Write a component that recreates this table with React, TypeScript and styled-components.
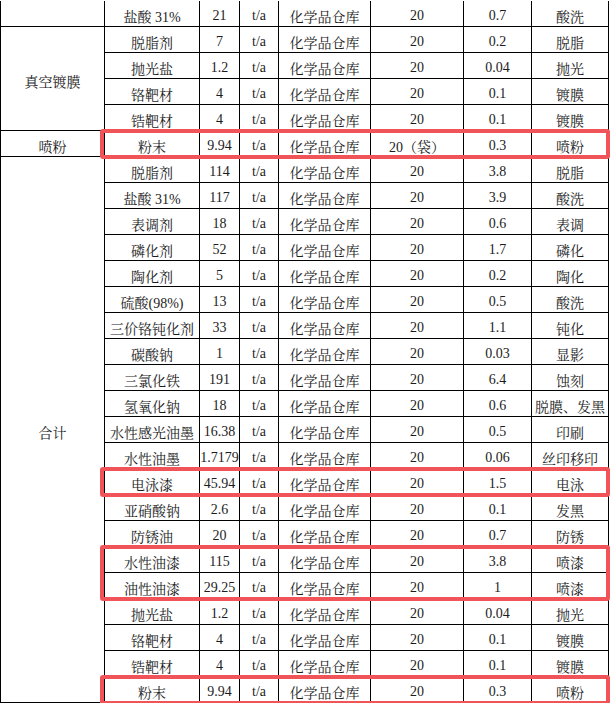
import React from 'react';
import styled, { createGlobalStyle } from 'styled-components';

const GlobalStyle = createGlobalStyle`
  html, body {
    margin: 0;
    padding: 0;
    background: #fff;
  }
  #root {
    padding-top: 1px;
  }
`;

const ROW_H = 26;

const Table = styled.div`
  display: flex;
  width: 609px;
  border-left: 1px solid #000;
  box-sizing: border-box;
  font-family: "Liberation Serif", "Noto Serif CJK SC", "Noto Sans CJK SC", serif;
  font-size: 14px;
  color: #1c1c1c;
`;

const GroupCol = styled.div`
  display: flex;
  flex-direction: column;
  width: 104px;
  flex: none;
`;

const GroupCell = styled.div<{ $span: number }>`
  box-sizing: border-box;
  height: ${p => p.$span * ROW_H}px;
  border-right: 1px solid #000;
  border-bottom: 1px solid #000;
  display: flex;
  align-items: center;
  justify-content: center;
  padding-top: 4px;
`;

const Body = styled.div`
  display: flex;
  flex-direction: column;
  width: 504px;
  flex: none;
`;

const Mark = styled.div`
  position: relative;

  &::after {
    content: '';
    position: absolute;
    top: -2px;
    bottom: -2px;
    left: -5px;
    right: -1px;
    border: 4px solid #f15458;
    border-radius: 3px;
    pointer-events: none;
  }
`;

const Row = styled.div`
  display: grid;
  grid-template-columns: 95px 40px 39px 92px 93px 68px 77px;
  height: ${ROW_H}px;
`;

const Cell = styled.div`
  box-sizing: border-box;
  border-right: 1px solid #000;
  border-bottom: 1px solid #000;
  display: flex;
  align-items: center;
  justify-content: center;
  padding-top: 4px;
  white-space: nowrap;
  overflow: visible;
`;

type Item = [string, string, string, string];

const groups: { name: string; items: Item[]; marks?: number[][] }[] = [
  { name: '', items: [['盐酸 31%', '21', '20', '0.7|酸洗']] },
  {
    name: '真空镀膜',
    items: [
      ['脱脂剂', '7', '20', '0.2|脱脂'],
      ['抛光盐', '1.2', '20', '0.04|抛光'],
      ['铬靶材', '4', '20', '0.1|镀膜'],
      ['锆靶材', '4', '20', '0.1|镀膜'],
    ],
  },
  { name: '喷粉', items: [['粉末', '9.94', '20（袋）', '0.3|喷粉']], marks: [[0, 1]] },
  {
    name: '合计',
    items: [
      ['脱脂剂', '114', '20', '3.8|脱脂'],
      ['盐酸 31%', '117', '20', '3.9|酸洗'],
      ['表调剂', '18', '20', '0.6|表调'],
      ['磷化剂', '52', '20', '1.7|磷化'],
      ['陶化剂', '5', '20', '0.2|陶化'],
      ['硫酸(98%)', '13', '20', '0.5|酸洗'],
      ['三价铬钝化剂', '33', '20', '1.1|钝化'],
      ['碳酸钠', '1', '20', '0.03|显影'],
      ['三氯化铁', '191', '20', '6.4|蚀刻'],
      ['氢氧化钠', '18', '20', '0.6|脱膜、发黑'],
      ['水性感光油墨', '16.38', '20', '0.5|印刷'],
      ['水性油墨', '1.7179', '20', '0.06|丝印移印'],
      ['电泳漆', '45.94', '20', '1.5|电泳'],
      ['亚硝酸钠', '2.6', '20', '0.1|发黑'],
      ['防锈油', '20', '20', '0.7|防锈'],
      ['水性油漆', '115', '20', '3.8|喷漆'],
      ['油性油漆', '29.25', '20', '1|喷漆'],
      ['抛光盐', '1.2', '20', '0.04|抛光'],
      ['铬靶材', '4', '20', '0.1|镀膜'],
      ['锆靶材', '4', '20', '0.1|镀膜'],
      ['粉末', '9.94', '20', '0.3|喷粉'],
    ],
    marks: [[12, 1], [15, 2], [20, 1]],
  },
];

function DataRow({ item }: { item: Item }) {
  const [name, amount, store, rest] = item;
  const [max, use] = rest.split('|');
  return (
    <Row>
      <Cell>{name}</Cell>
      <Cell>{amount}</Cell>
      <Cell>t/a</Cell>
      <Cell>化学品仓库</Cell>
      <Cell>{store}</Cell>
      <Cell>{max}</Cell>
      <Cell>{use}</Cell>
    </Row>
  );
}

function renderItems(items: Item[], marks: number[][] = []) {
  const out: React.ReactNode[] = [];
  let i = 0;
  while (i < items.length) {
    const mark = marks.find(m => m[0] === i);
    if (mark) {
      out.push(
        <Mark key={i}>
          {items.slice(i, i + mark[1]).map((it, j) => (
            <DataRow key={j} item={it} />
          ))}
        </Mark>
      );
      i += mark[1];
    } else {
      out.push(<DataRow key={i} item={items[i]} />);
      i += 1;
    }
  }
  return out;
}

export default function App() {
  return (
    <>
      <GlobalStyle />
      <Table>
        <GroupCol>
          {groups.map((g, i) => (
            <GroupCell key={i} $span={g.items.length}>
              {g.name}
            </GroupCell>
          ))}
        </GroupCol>
        <Body>
          {groups.map((g, i) => (
            <React.Fragment key={i}>{renderItems(g.items, g.marks)}</React.Fragment>
          ))}
        </Body>
      </Table>
    </>
  );
}
